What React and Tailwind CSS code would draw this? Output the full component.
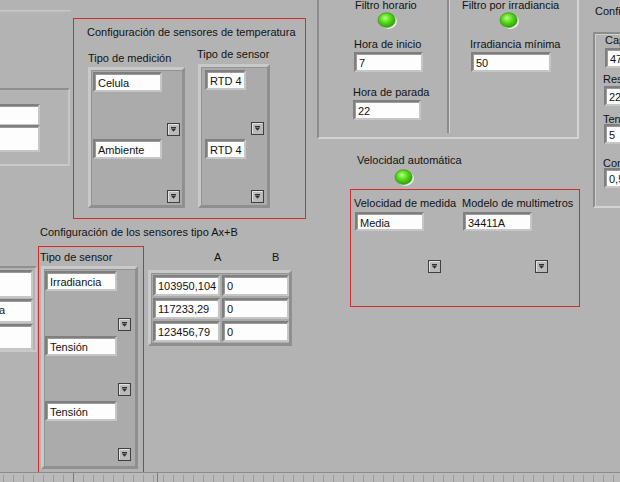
import React from "react";

function Field({ cls, text, tc = "" }) {
  return (
    <div className={"absolute border-2 border-t-[#7f7f7f] border-l-[#7f7f7f] border-r-[#c6c6c6] border-b-[#c6c6c6] bg-[#a3a3a3] " + cls}>
      <div className={"h-full bg-[#fdfdfd] pl-[2px] leading-[16px] whitespace-nowrap overflow-hidden border-t border-l border-[#9a9a9a] " + tc}>{text}</div>
    </div>
  );
}

function FField({ cls, text }) {
  return (
    <div className={"border-2 border-t-[#7f7f7f] border-l-[#7f7f7f] border-r-[#c6c6c6] border-b-[#c6c6c6] bg-[#a3a3a3] " + cls}>
      <div className="h-full bg-[#fdfdfd] pl-[2px] leading-[16px] whitespace-nowrap overflow-hidden border-t border-l border-[#9a9a9a]">{text}</div>
    </div>
  );
}

function Btn({ cls = "" }) {
  return (
    <div className={"w-[13px] h-[13px] " + cls}>
      <svg width="13" height="13" viewBox="0 0 13 13">
        <rect x="0.5" y="0.5" width="12" height="12" fill="#bababa" stroke="#3f3f3f" />
        <path d="M1.5 11.5V1.5H11.5" stroke="#e2e2e2" fill="none" />
        <path d="M4 4.5H9" stroke="#303030" />
        <path d="M3.8 5.6H9.2L6.5 8.8Z" fill="#303030" />
      </svg>
    </div>
  );
}

function Led({ id, cls }) {
  return (
    <svg className={"absolute " + cls} width="21" height="18" viewBox="0 0 21 18">
      <defs>
        <radialGradient id={id} cx="0.45" cy="0.4" r="0.6" fx="0.4" fy="0.35">
          <stop offset="0" stopColor="#b8ff8c" />
          <stop offset="0.45" stopColor="#5ee01f" />
          <stop offset="1" stopColor="#2a9f05" />
        </radialGradient>
      </defs>
      <ellipse cx="11.3" cy="9.6" rx="8.6" ry="7.4" fill="#ececec" />
      <ellipse cx="9.6" cy="8.1" rx="8.6" ry="7.4" fill={`url(#${id})`} stroke="#3b8f12" strokeWidth="0.6" />
    </svg>
  );
}

function Label({ cls, children }) {
  return <span className={"absolute whitespace-nowrap " + cls}>{children}</span>;
}

function ArrayFrame({ cls, children }) {
  return (
    <div className={"absolute border-[3px] border-t-[#c9c9c9] border-l-[#c9c9c9] border-r-[#8f8f8f] border-b-[#8f8f8f] bg-[#ababab] " + cls}>
      <div className="h-full border-t border-l border-[#939393] flex flex-col">{children}</div>
    </div>
  );
}

export default function App() {
  const ticks = [];
  for (let i = 0; i < 62; i++) ticks.push(3 + i * 10);
  return (
    <div className="relative w-[620px] h-[482px] overflow-hidden bg-[#b3b3b3] font-['Liberation_Sans',Arial,sans-serif] text-[11px] leading-[13px] text-[#121212]">
      {/* top-left line */}
      <div className="absolute left-0 top-[10px] w-[71px] h-[2px] bg-[#c6c6c6] border-b border-[#bdbdbd]" />

      {/* left cluster 1 */}
      <div className="absolute left-[-10px] top-[88px] w-[80px] h-[78px] border-t-2 border-t-[#8f8f8f] border-r-2 border-r-[#c6c6c6] border-b-2 border-b-[#c9c9c9]" />
      <Field cls="left-[-6px] top-[104px] w-[46px] h-[22px]" text="" />
      <Field cls="left-[-6px] top-[125px] w-[46px] h-[27px]" text="" />

      {/* left cluster 2 */}
      <div className="absolute left-[-10px] top-[266px] w-[47px] h-[86px] border-t-2 border-t-[#8f8f8f] border-r-2 border-r-[#c6c6c6] border-b-2 border-b-[#c9c9c9]" />
      <Field cls="left-[-6px] top-[270px] w-[39px] h-[28px]" text="" />
      <Field cls="left-[-6px] top-[299px] w-[39px] h-[24px]" text="a" tc="pl-0" />
      <Field cls="left-[-6px] top-[324px] w-[39px] h-[26px]" text="" />

      {/* temperature config */}
      <div className="absolute left-[73px] top-[18px] w-[233px] h-[201px] border border-[#d62b2b]" />
      <Label cls="left-[87px] top-[26px]">Configuración de sensores de temperatura</Label>
      <Label cls="left-[88px] top-[52px]">Tipo de medición</Label>
      <Label cls="left-[197px] top-[48px]">Tipo de sensor</Label>

      <ArrayFrame cls="left-[88px] top-[67px] w-[97px] h-[141px]">
        {["Celula", "Ambiente"].map((t) => (
          <div key={t} className="h-[67px] flex flex-col pl-[1px] pt-[1px] pb-[2px] pr-[2px]">
            <FField cls="w-[69px] h-[20px]" text={t} />
            <Btn cls="self-end mt-auto" />
          </div>
        ))}
      </ArrayFrame>

      <ArrayFrame cls="left-[198px] top-[64px] w-[72px] h-[144px]">
        {["RTD 4", "RTD 4"].map((t, i) => (
          <div key={i} className="h-[69px] flex flex-col pl-[3px] pt-[2px] pb-[2px] pr-[3px]">
            <FField cls="w-[41px] h-[20px]" text={t} />
            <Btn cls="self-end mt-auto" />
          </div>
        ))}
      </ArrayFrame>

      {/* top middle cluster */}
      <div className="absolute left-[317px] top-[-4px] w-[262px] h-[143px] border-l-2 border-l-[#8c8c8c] border-r-2 border-r-[#d3d3d3] border-b-2 border-b-[#d3d3d3]" />
      <div className="absolute left-[447px] top-0 w-[3px] h-[133px] border-l-2 border-l-[#8c8c8c] border-r border-r-[#d3d3d3]" />

      <Label cls="left-[355px] top-[-1px]">Filtro horario</Label>
      <Led id="g1" cls="left-[377px] top-[12px]" />
      <Label cls="left-[354px] top-[38px]">Hora de inicio</Label>
      <Field cls="left-[354px] top-[52px] w-[69px] h-[20px]" text="7" />
      <Label cls="left-[353px] top-[86px]">Hora de parada</Label>
      <Field cls="left-[353px] top-[100px] w-[68px] h-[20px]" text="22" />

      <Label cls="left-[462px] top-[-1px]">Filtro por irradiancia</Label>
      <Led id="g2" cls="left-[499px] top-[12px]" />
      <Label cls="left-[470px] top-[38px]">Irradiancia mínima</Label>
      <Field cls="left-[471px] top-[52px] w-[80px] h-[20px]" text="50" />

      {/* right partial cluster */}
      <Label cls="left-[595px] top-[5px]">Configuración</Label>
      <div className="absolute left-[593px] top-[32px] w-[40px] h-[176px] border-l-2 border-l-[#8c8c8c] border-t-2 border-t-[#8c8c8c] border-b-2 border-b-[#d3d3d3]">
        <div className="h-full border-l border-t border-[#cfcfcf]" />
      </div>
      <Label cls="left-[605px] top-[34px]">Capacidad</Label>
      <Field cls="left-[605px] top-[48px] w-[40px] h-[20px]" text="47" />
      <Label cls="left-[603px] top-[73px]">Resistencia</Label>
      <Field cls="left-[604px] top-[86px] w-[40px] h-[20px]" text="22" />
      <Label cls="left-[603px] top-[113px]">Tensión</Label>
      <Field cls="left-[604px] top-[124px] w-[40px] h-[20px]" text="5" />
      <Label cls="left-[603px] top-[157px]">Constante</Label>
      <Field cls="left-[604px] top-[168px] w-[40px] h-[20px]" text="0,5" />

      {/* velocidad */}
      <Label cls="left-[357px] top-[154px]">Velocidad automática</Label>
      <Led id="g3" cls="left-[394px] top-[169px]" />
      <div className="absolute left-[350px] top-[189px] w-[230px] h-[118px] border border-[#d62b2b]" />
      <Label cls="left-[354px] top-[197px]">Velocidad de medida</Label>
      <Label cls="left-[462px] top-[197px]">Modelo de multimetros</Label>
      <Field cls="left-[355px] top-[212px] w-[69px] h-[19px]" text="Media" />
      <Field cls="left-[463px] top-[212px] w-[69px] h-[19px]" text="34411A" />
      <Btn cls="absolute left-[428px] top-[260px]" />
      <Btn cls="absolute left-[535px] top-[260px]" />

      {/* Ax+B */}
      <Label cls="left-[40px] top-[226px]">Configuración de los sensores tipo Ax+B</Label>
      <div className="absolute left-[38px] top-[246px] w-[106px] h-[227px] border border-[#d62b2b]" />
      <Label cls="left-[40px] top-[251px]">Tipo de sensor</Label>
      <ArrayFrame cls="left-[41px] top-[266px] w-[97px] h-[203px]">
        {["Irradiancia", "Tensión", "Tensión"].map((t, i) => (
          <div key={i} className="h-[65px] flex flex-col pl-0 pt-[1px] pb-[4px] pr-[4px]">
            <FField cls="w-[72px] h-[20px]" text={t} />
            <Btn cls="self-end mt-auto" />
          </div>
        ))}
      </ArrayFrame>

      <Label cls="left-[214px] top-[251px]">A</Label>
      <Label cls="left-[272px] top-[251px]">B</Label>
      <div className="absolute left-[148px] top-[270px] w-[144px] h-[76px] border-[3px] border-t-[#c9c9c9] border-l-[#c9c9c9] border-r-[#8f8f8f] border-b-[#8f8f8f] bg-[#ababab]">
        <div className="grid grid-cols-[67px_67px] gap-[2px] p-px border-t border-l border-[#939393] h-full">
          {[["103950,104", "0"], ["117233,29", "0"], ["123456,79", "0"]].map((r, i) => (
            <React.Fragment key={i}>
              <FField cls="h-[21px]" text={r[0]} />
              <FField cls="h-[21px]" text={r[1]} />
            </React.Fragment>
          ))}
        </div>
      </div>

      {/* bottom ruler */}
      <div className="absolute left-0 top-[472px] w-[620px] h-[10px] border-t border-[#8c8c8c] bg-[#bababa]">
        <svg width="620" height="9" className="block">
          {ticks.map((x) => (
            <line key={x} x1={x + 0.5} y1="2" x2={x + 0.5} y2="9" stroke="#9c9c9c" />
          ))}
          <line x1="73.5" y1="0" x2="73.5" y2="9" stroke="#7c7c7c" />
          <line x1="157.5" y1="0" x2="157.5" y2="9" stroke="#7c7c7c" />
        </svg>
      </div>
    </div>
  );
}
